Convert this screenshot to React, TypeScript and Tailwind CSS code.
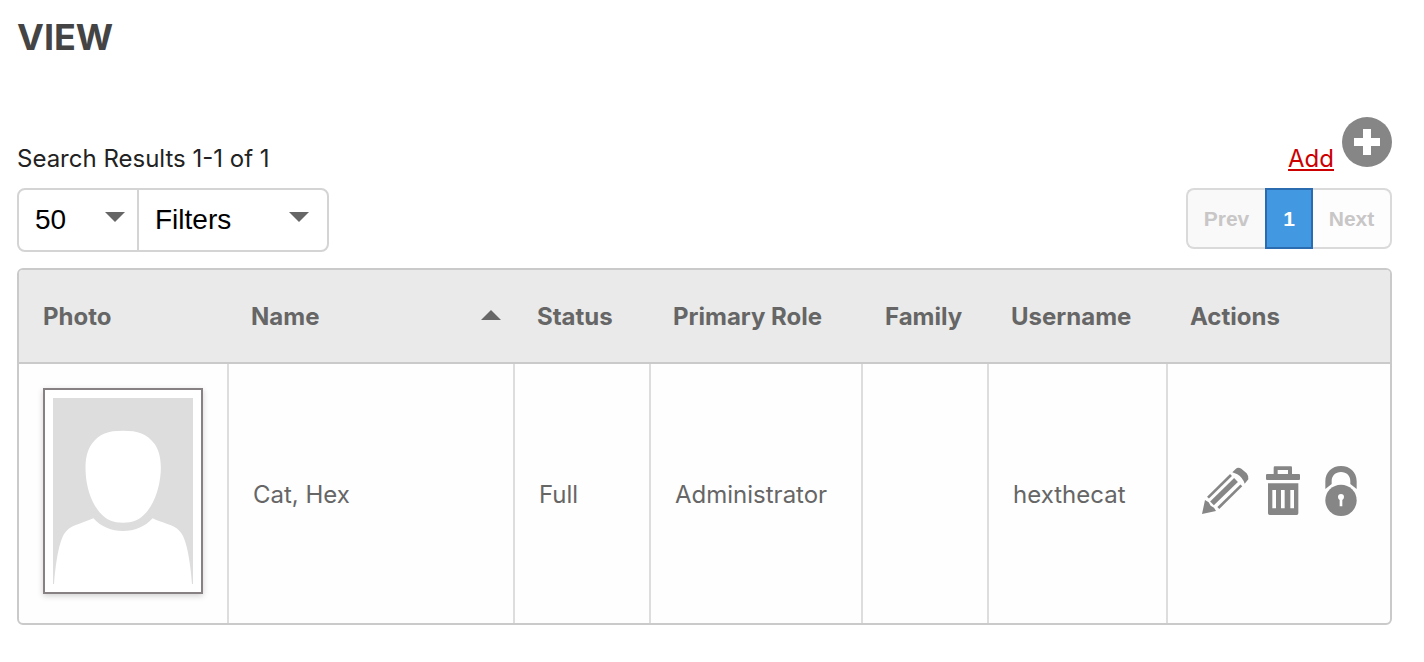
import type { ReactNode } from "react";

const columns = [
  { label: "Photo", width: "w-[208px]" },
  { label: "Name", width: "w-[286px]", sorted: true },
  { label: "Status", width: "w-[136px]" },
  { label: "Primary Role", width: "w-[212px]" },
  { label: "Family", width: "w-[126px]" },
  { label: "Username", width: "w-[179px]" },
  { label: "Actions", width: "" },
];

const bodyCell = "border-l-2 border-[#dddddd] px-6 pt-[2px]";

function PersonPlaceholder() {
  return (
    <svg viewBox="129 114 420 558" className="block h-[186px] w-[140px]" role="img" aria-label="No photo">
      <rect x="129" y="114" width="420" height="558" fill="#dddddd" />
      <path
        d="M339 212C384 212 410 220 434 252C450 276 454 305 452 338C449 382 434 428 408 458C388 480 368 488 339 488C310 488 290 480 270 458C244 428 229 382 227 338C225 305 229 276 245 252C268 220 294 212 339 212Z"
        fill="#fff"
      />
      <path
        d="M132 672C136 620 144 560 158 530C169 508 182 500 206 492C226 485 238 480 250 475C274 501 304 513 339 513C374 513 404 501 428 475C440 481 452 485 472 492C496 500 509 508 520 530C534 560 542 620 546 672Z"
        fill="#fff"
      />
    </svg>
  );
}

function PencilIcon() {
  return (
    <svg viewBox="60 78 150 150" className="size-[50px]" aria-hidden="true">
      <path d="M66 222L75 180L86 187L92 197L102 203L108 213Z" fill="#868686" />
      <g stroke="#868686" fill="none">
        <path d="M84 173L153 105" strokeWidth="8" />
        <path d="M96 190L168 120" strokeWidth="16" />
        <path d="M115 204L184 136" strokeWidth="8" />
      </g>
      <path d="M157 97L167 87Q174 80 184 86L200 100Q207 109 205 118L194 131Q188 113 172 103Z" fill="#868686" />
    </svg>
  );
}

function TrashIcon() {
  return (
    <svg viewBox="234 78 150 150" className="size-[50px]" aria-hidden="true">
      <path
        fillRule="evenodd"
        fill="#868686"
        d="M284 79H333Q336 79 336 83V102H357Q360 102 360 106V116Q360 120 357 120H261Q258 120 258 116V106Q258 102 261 102H281V83Q281 79 284 79ZM293 90V102H324V90Z"
      />
      <path
        fillRule="evenodd"
        fill="#868686"
        d="M264 130H355V220Q355 225 350 225H269Q264 225 264 220ZM277 150V205H288V150ZM303 150V205H314V150ZM331 150V205H342V150Z"
      />
    </svg>
  );
}

function LockIcon() {
  return (
    <svg viewBox="408 78 150 150" className="size-[50px]" aria-hidden="true">
      <path
        d="M436 147V124C436 96 456 78 483 78C510 78 530 96 530 124V147L511 132V124C511 107 500 96 483 96C466 96 455 107 455 124V132Z"
        fill="#868686"
      />
      <circle cx="483" cy="181" r="47" fill="#868686" />
      <path d="M479 199V180Q474 177 474 171Q474 162 483 162Q492 162 492 171Q492 177 487 180V199Z" fill="#fff" />
    </svg>
  );
}

type DropdownProps = { label: string; width: string; caret: string; children: ReactNode };

function Dropdown({ label, width, caret, children }: DropdownProps) {
  return (
    <div className={`relative ${width}`}>
      <select
        aria-label={label}
        className="h-[60px] w-full appearance-none bg-transparent px-4 font-['Liberation_Sans',Arial,sans-serif] text-[28px] text-black"
      >
        {children}
      </select>
      <svg
        viewBox="0 0 20 10"
        className={`pointer-events-none absolute top-[22px] h-[10px] w-5 ${caret}`}
        aria-hidden="true"
      >
        <path d="M0 0H20L10 10Z" fill="#666" />
      </svg>
    </div>
  );
}

export default function App() {
  return (
    <main className="bg-white pt-3 pr-8 pb-9 pl-[17px] font-[Inter,sans-serif] text-2xl text-[#222]">
      <h1 className="text-4xl leading-[50px] font-bold text-[#444]">VIEW</h1>

      <div className="mt-[55px] flex items-end justify-between">
        <p className="pb-[13px] leading-8">Search Results 1-1 of 1</p>
        <a href="#add" className="flex items-end gap-2 pb-[21px] text-[#cc0000]">
          <span className="-mb-2 leading-8 underline decoration-2 underline-offset-2">Add</span>
          <svg viewBox="0 0 50 50" className="size-[50px]" aria-hidden="true">
            <circle cx="25" cy="25" r="25" fill="#868686" />
            <path d="M21 12H29V21H38V29H29V38H21V29H12V21H21Z" fill="#fff" />
          </svg>
        </a>
      </div>

      <div className="flex items-start justify-between">
        <div className="flex rounded-lg border-2 border-[#d4d4d4]">
          <Dropdown label="Rows per page" width="w-[118px]" caret="right-3">
            <option>50</option>
          </Dropdown>
          <div className="w-[2px] bg-[#d4d4d4]" />
          <Dropdown label="Filters" width="w-[188px]" caret="right-[18px]">
            <option>Filters</option>
          </Dropdown>
        </div>

        <nav
          aria-label="Pages"
          className="flex h-[61px] font-['Liberation_Sans',Arial,sans-serif] text-[21px] font-bold text-[#c8c6c6]"
        >
          <button disabled className="w-[79px] rounded-l-lg border-2 border-r-0 border-[#dadada] bg-[#f9f9f9]">
            Prev
          </button>
          <button aria-current="page" className="w-12 border-2 border-[#2b6cb0] bg-[#4299e1] text-white">
            1
          </button>
          <button disabled className="w-[79px] rounded-r-lg border-2 border-l-0 border-[#dadada] bg-[#fdfdfd]">
            Next
          </button>
        </nav>
      </div>

      <div className="mt-4 overflow-hidden rounded-md border-2 border-[#cacaca] bg-[#fefefe] text-[#666]">
        <table className="w-full table-fixed border-separate border-spacing-0 text-left">
          <thead>
            <tr className="h-[94px] bg-[#eaeaea]">
              {columns.map((column) => (
                <th
                  key={column.label}
                  aria-sort={column.sorted ? "ascending" : undefined}
                  className={`${column.width} border-b-2 border-[#cacaca] pt-[2px] pl-6 font-bold whitespace-nowrap`}
                >
                  {column.sorted ? (
                    <span className="flex items-center justify-between pr-3">
                      {column.label}
                      <svg viewBox="0 0 20 10" className="mb-1 h-[10px] w-5" aria-hidden="true">
                        <path d="M0 10H20L10 0Z" fill="#666" />
                      </svg>
                    </span>
                  ) : (
                    column.label
                  )}
                </th>
              ))}
            </tr>
          </thead>
          <tbody>
            <tr>
              <td className="px-6 pt-6 pb-[29px]">
                <div className="w-40 border-2 border-[#888183] bg-white p-2 shadow-[0_2px_6px_rgba(0,0,0,0.18)]">
                  <PersonPlaceholder />
                </div>
              </td>
              <td className={bodyCell}>Cat, Hex</td>
              <td className={bodyCell}>Full</td>
              <td className={bodyCell}>Administrator</td>
              <td className={bodyCell}></td>
              <td className={bodyCell}>hexthecat</td>
              <td className={bodyCell}>
                <div className="flex gap-2 pb-2 pl-2">
                  <button aria-label="Edit">
                    <PencilIcon />
                  </button>
                  <button aria-label="Delete">
                    <TrashIcon />
                  </button>
                  <button aria-label="Change password">
                    <LockIcon />
                  </button>
                </div>
              </td>
            </tr>
          </tbody>
        </table>
      </div>
    </main>
  );
}
